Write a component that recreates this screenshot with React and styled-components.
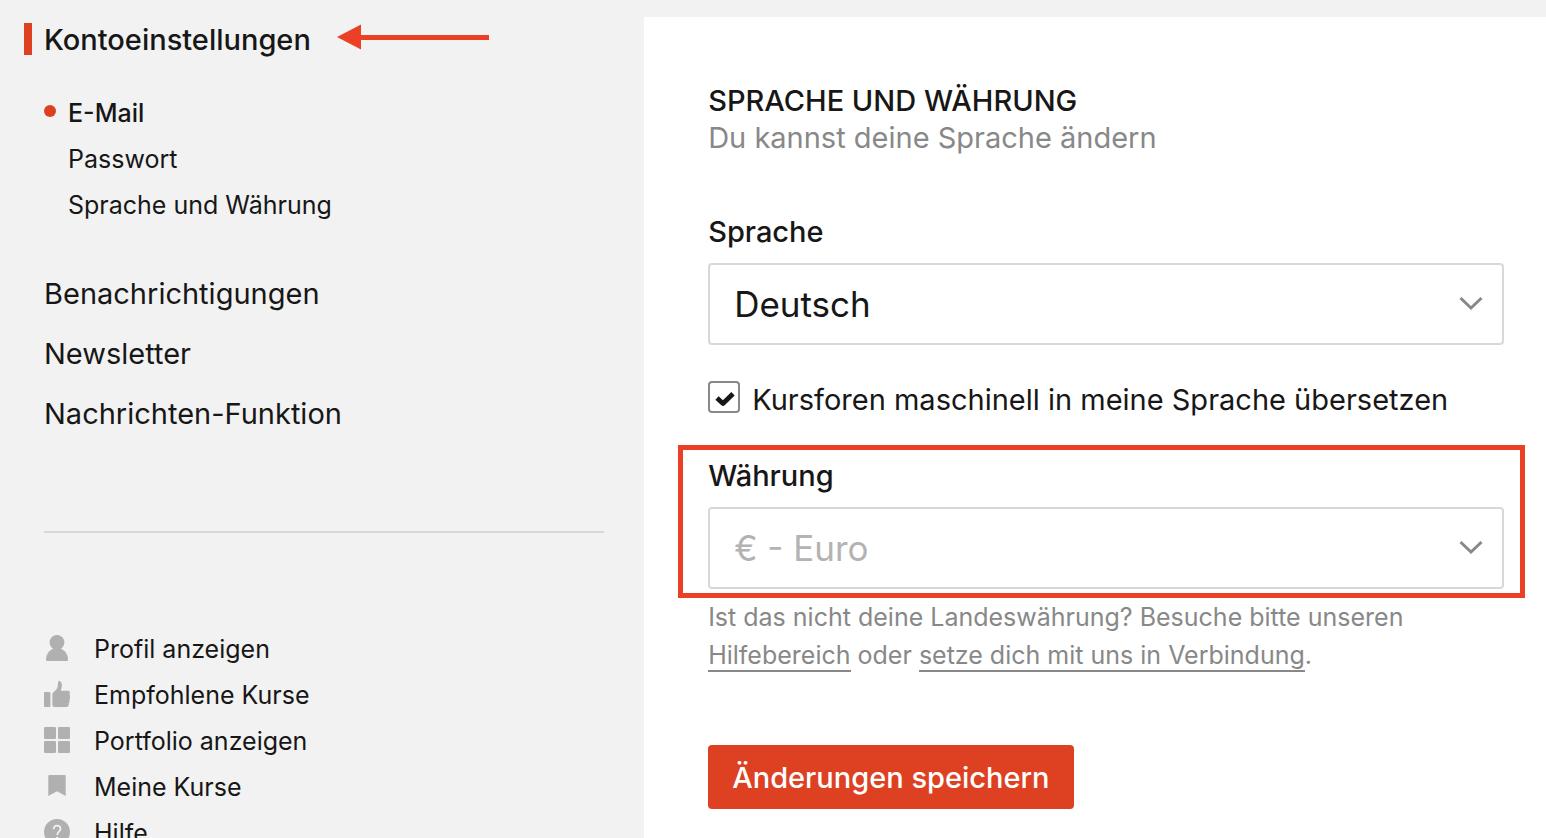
import React, { useState } from 'react'
import styled, { createGlobalStyle, css, ThemeProvider } from 'styled-components'

const theme = {
	colors: {
		text: '#171717',
		muted: '#888888',
		disabled: '#b3b3b3',
		icon: '#b0b0b0',
		line: '#d8d8d8',
		background: '#f2f2f2',
		accent: '#dd4122',
		marker: '#eb4026',
	},
	sizes: {
		small: '25px',
		medium: '29px',
		large: '35px',
	},
}

const GlobalStyle = createGlobalStyle`
	*, *:before, *:after {
		box-sizing: border-box;
	}

	body {
		margin: 0;
		background-color: ${props => props.theme.colors.background};
		color: ${props => props.theme.colors.text};
		font-family: Inter, 'Liberation Sans', sans-serif;
	}

	h1, h2, p, ul {
		margin: 0;
		padding: 0;
	}

	ul {
		list-style: none;
	}
`;

const Page = styled.div`
	display: grid;
	grid-template-columns: 5fr 7fr;
	height: 100vh;
	overflow: hidden;
`;

const Sidebar = styled.aside`
	padding: 23px 40px 0 24px;
`;

const SidebarHead = styled.div`
	display: flex;
	align-items: flex-start;
	gap: 26px;
`;

const SidebarTitle = styled.h1`
	display: flex;
	align-items: flex-start;
	gap: 12px;
	font-size: ${props => props.theme.sizes.medium};
	font-weight: 500;
	line-height: 34px;

	&:before {
		content: '';
		width: 8px;
		height: 32px;
		background-color: ${props => props.theme.colors.accent};
	}
`;

const Arrow = styled.svg`
	width: 152px;
	height: 28px;
	fill: ${props => props.theme.colors.marker};
`;

const SubMenu = styled.ul`
	margin-top: 33px;
	padding-left: 20px;
`;

const SubLink = styled.a`
	display: flex;
	align-items: center;
	gap: 12px;
	font-size: ${props => props.theme.sizes.small};
	font-weight: ${props => props.$active ? 500 : 400};
	line-height: 46px;
	color: inherit;
	text-decoration: none;

	&:before {
		content: '';
		width: 12px;
		height: 12px;
		margin-bottom: 4px;
		border-radius: 50%;
		background-color: ${props => props.$active ? props.theme.colors.accent : 'transparent'};
	}
`;

const Menu = styled.ul`
	margin: 36px 0 0 20px;
	padding-bottom: 87px;
	border-bottom: 2px solid ${props => props.theme.colors.line};
`;

const MenuLink = styled.a`
	display: block;
	font-size: ${props => props.theme.sizes.medium};
	line-height: 60px;
	color: inherit;
	text-decoration: none;
`;

const ShortcutMenu = styled.ul`
	margin: 93px 0 0 20px;
`;

const ShortcutLink = styled.a`
	display: flex;
	align-items: center;
	gap: 24px;
	font-size: ${props => props.theme.sizes.small};
	line-height: 46px;
	color: inherit;
	text-decoration: none;

	svg {
		width: 26px;
		height: 26px;
		margin-bottom: 2px;
		fill: ${props => props.theme.colors.icon};
	}
`;

const Content = styled.main`
	margin-top: 17px;
	padding: 65px 42px 0 64px;
	background-color: #fff;
`;

const Title = styled.h2`
	font-size: ${props => props.theme.sizes.medium};
	font-weight: 500;
	line-height: 37px;
	text-transform: uppercase;
`;

const Subtitle = styled.p`
	font-size: ${props => props.theme.sizes.medium};
	line-height: 37px;
	color: ${props => props.theme.colors.muted};
`;

const Field = styled.div`
	position: relative;
	margin-top: ${props => props.$highlighted ? '39px' : '57px'};

	/* red frame around the field */
	${props => props.$highlighted && css`
		&:after {
			content: '';
			position: absolute;
			top: -12px;
			right: -21px;
			bottom: -9px;
			left: -30px;
			border: 5px solid ${props.theme.colors.marker};
			pointer-events: none;
		}
	`}
`;

const Label = styled.label`
	display: block;
	margin-bottom: 13px;
	font-size: ${props => props.theme.sizes.medium};
	font-weight: 500;
	line-height: 37px;
`;

const SelectWrap = styled.div`
	position: relative;

	svg {
		position: absolute;
		top: 32px;
		right: 21px;
		width: 24px;
		height: 16px;
		fill: none;
		stroke: ${props => props.theme.colors.muted};
		stroke-width: 3;
		pointer-events: none;
	}
`;

const Select = styled.select`
	display: block;
	appearance: none;
	width: 100%;
	height: 82px;
	padding: 0 60px 0 24px;
	border: 2px solid ${props => props.theme.colors.line};
	border-radius: 4px;
	background-color: #fff;
	font-family: inherit;
	font-size: ${props => props.theme.sizes.large};
	color: ${props => props.theme.colors.text};

	&:disabled {
		color: ${props => props.theme.colors.disabled};
		opacity: 1;
	}
`;

const CheckboxRow = styled.label`
	display: flex;
	align-items: flex-start;
	gap: 12px;
	margin-top: 36px;
	font-size: ${props => props.theme.sizes.medium};
	line-height: 37px;
`;

const CheckboxBox = styled.span`
	position: relative;
	flex: none;
	width: 32px;
	height: 32px;

	input {
		display: block;
		appearance: none;
		width: 32px;
		height: 32px;
		margin: 0;
		border: 2px solid ${props => props.theme.colors.muted};
		border-radius: 4px;
		background-color: #fff;
	}

	svg {
		position: absolute;
		top: 0;
		left: 0;
		width: 32px;
		height: 32px;
		fill: none;
		stroke: ${props => props.theme.colors.text};
		stroke-width: 4.8;
		stroke-linejoin: round;
		pointer-events: none;
	}
`;

const Note = styled.p`
	margin-top: 9px;
	font-size: ${props => props.theme.sizes.small};
	line-height: 38px;
	color: ${props => props.theme.colors.muted};

	a {
		color: inherit;
		text-decoration: none;
		border-bottom: 2px solid currentColor;
	}
`;

const SaveButton = styled.button`
	height: 64px;
	margin-top: 71px;
	padding: 0 24px;
	border: 0;
	border-radius: 4px;
	background-color: ${props => props.theme.colors.accent};
	color: #fff;
	font-family: inherit;
	font-size: ${props => props.theme.sizes.medium};
	font-weight: 500;
`;

const Chevron = () => (
	<svg viewBox="0 0 24 16" aria-hidden="true">
		<path d="M1.500 3 L12 13 L22.500 3" />
	</svg>
)

const icons = {
	profile: (
		<>
			<circle cx="13" cy="7.4" r="7.4" />
			<path d="M2 25c0-5.600 3-9.400 7.200-11.200h7.600C21 15.600 24 19.400 24 25a1 1 0 0 1-1 1H3a1 1 0 0 1-1-1z" />
		</>
	),
	thumb: (
		<>
			<rect x="0" y="11" width="6.400" height="15" rx="1" />
			<path d="M8.400 13.200c0-1.800 3.400-3.200 4.600-5.600 1-2 .7-4.200 1.100-6.400.2-1.200 1.400-1.500 2.300-.8 1.200.9 1.600 2.600 1.500 4.400-.1 1.900-.8 3.500-1.200 4.900h7.600c1.400 0 1.700 1.200 1.500 2.600l-.3 1.500.5 1v2.600l-.5 1 .1 2.600-.7.800-.2 2.200c-.2 1.200-.8 2-2 2H10.400c-1.200 0-2-.8-2-2z" />
		</>
	),
	portfolio: (
		<>
			<rect x="0" y="0" width="12" height="12" rx="1.200" />
			<rect x="14" y="0" width="12" height="12" rx="1.200" />
			<rect x="0" y="14" width="12" height="12" rx="1.200" />
			<rect x="14" y="14" width="12" height="12" rx="1.200" />
		</>
	),
	bookmark: <path d="M5.300 2h15.400a1 1 0 0 1 1 1v20L13 18.200 4.300 23V3a1 1 0 0 1 1-1z" />,
	help: (
		<>
			<circle cx="13" cy="13" r="13" />
			<path d="M9.500 10.200c0-2.200 1.500-3.600 3.500-3.600s3.500 1.300 3.500 3.200c0 2.700-3.300 3-3.300 6.200" fill="none" stroke="#f2f2f2" strokeWidth="1.700" />
			<circle cx="13.200" cy="19" r="1.200" fill="#f2f2f2" />
		</>
	),
}

const settings = ['E-Mail', 'Passwort', 'Sprache und Währung']
const sections = ['Benachrichtigungen', 'Newsletter', 'Nachrichten-Funktion']
const shortcuts = [
	{ icon: 'profile', label: 'Profil anzeigen' },
	{ icon: 'thumb', label: 'Empfohlene Kurse' },
	{ icon: 'portfolio', label: 'Portfolio anzeigen' },
	{ icon: 'bookmark', label: 'Meine Kurse' },
	{ icon: 'help', label: 'Hilfe' },
]

const SettingsNav = () => (
	<Sidebar>
		<SidebarHead>
			<SidebarTitle>Kontoeinstellungen</SidebarTitle>
			<Arrow viewBox="0 0 152 28" aria-hidden="true">
				<path d="M0 14 L24 1.500 V12 H152 V17 H24 V26.500 Z" />
			</Arrow>
		</SidebarHead>
		<SubMenu>
			{settings.map((label, i) => (
				<li key={label}>
					<SubLink href="#" $active={i === 0}>{label}</SubLink>
				</li>
			))}
		</SubMenu>
		<Menu>
			{sections.map(label => (
				<li key={label}>
					<MenuLink href="#">{label}</MenuLink>
				</li>
			))}
		</Menu>
		<ShortcutMenu>
			{shortcuts.map(({ icon, label }) => (
				<li key={label}>
					<ShortcutLink href="#">
						<svg viewBox="0 0 26 26" aria-hidden="true">{icons[icon]}</svg>
						{label}
					</ShortcutLink>
				</li>
			))}
		</ShortcutMenu>
	</Sidebar>
)

const App = () => {

	const [translate, setTranslate] = useState(true);

	return (
		<ThemeProvider theme={theme}>
			<GlobalStyle />
			<Page>
				<SettingsNav />
				<Content>
					<Title>Sprache und Währung</Title>
					<Subtitle>Du kannst deine Sprache ändern</Subtitle>
					<Field>
						<Label htmlFor="language">Sprache</Label>
						<SelectWrap>
							<Select id="language" defaultValue="de">
								<option value="de">Deutsch</option>
							</Select>
							<Chevron />
						</SelectWrap>
					</Field>
					<CheckboxRow>
						<CheckboxBox>
							<input type="checkbox" checked={translate} onChange={e => setTranslate(e.target.checked)} />
							{translate && (
								<svg viewBox="0 0 32 32" aria-hidden="true">
									<path d="M9 17 L15 22.500 L25 12.800" />
								</svg>
							)}
						</CheckboxBox>
						Kursforen maschinell in meine Sprache übersetzen
					</CheckboxRow>
					<Field $highlighted>
						<Label htmlFor="currency">Währung</Label>
						<SelectWrap>
							<Select id="currency" defaultValue="eur" disabled>
								<option value="eur">€ - Euro</option>
							</Select>
							<Chevron />
						</SelectWrap>
					</Field>
					<Note>
						Ist das nicht deine Landeswährung? Besuche bitte unseren <a href="#">Hilfebereich</a> oder <a href="#">setze dich mit uns in Verbindung</a>.
					</Note>
					<SaveButton type="button">Änderungen speichern</SaveButton>
				</Content>
			</Page>
		</ThemeProvider>
	)
}

export default App
